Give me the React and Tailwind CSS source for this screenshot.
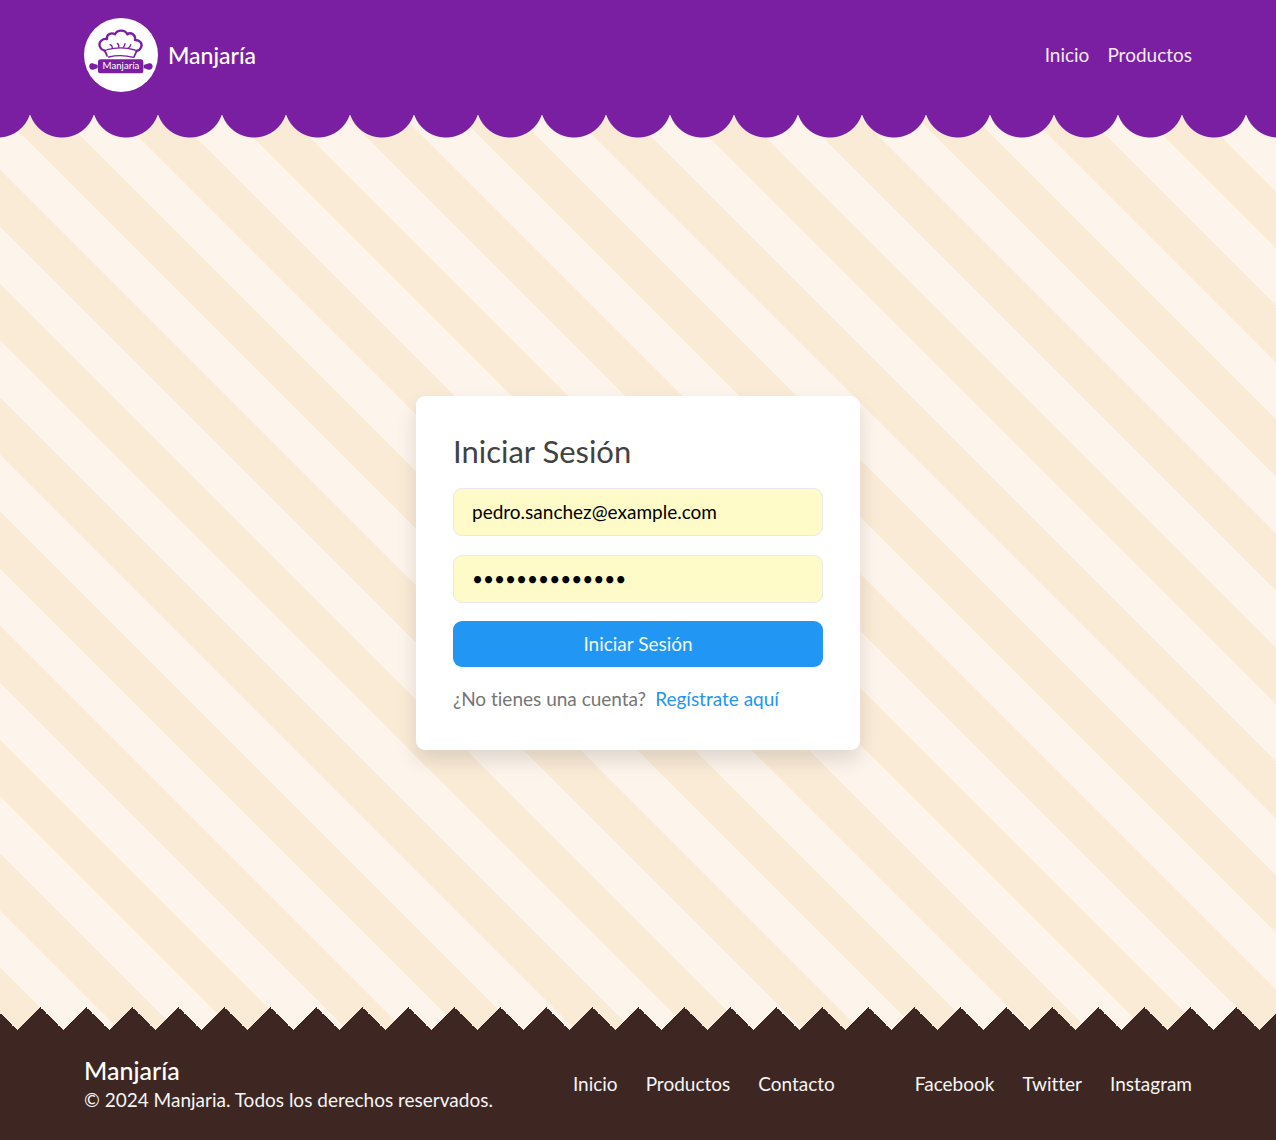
import React from "react";

function Logo() {
  return (
    <svg viewBox="24 24 222 222" className="size-[74px] shrink-0" role="img" aria-label="Logo de Manjaría">
      <circle cx="135" cy="135" r="111" fill="#fff" />
      <g fill="none" stroke="#7b1fa2" strokeLinecap="round" strokeLinejoin="round">
        <path
          d="M88 122C70 119 65 100 77 91C82 86 88 86 93 87C91 73 106 66 117 73C124 58 148 59 154 73C165 65 180 75 177 90C191 89 201 101 195 112C192 120 186 122 181 123"
          strokeWidth="7"
        />
        <path d="M84 121C90 127 92 133 93 138M183 123C178 130 176 135 174 141" strokeWidth="5" />
        <path d="M93 119Q136 108 177 120" strokeWidth="4" />
        <path d="M98 141Q135 132 172 142" strokeWidth="4" />
        <path d="M102 104Q109 106 109 114M124 100Q130 104 128 112M147 101Q146 108 142 112M164 104Q163 111 157 114" strokeWidth="4" />
      </g>
      <g fill="#7b1fa2">
        <rect x="66" y="148" width="136" height="42" rx="8" />
        <path d="M65 165V175C58 176 54 181 47 179C38 178 37 162 46 160C54 159 58 164 65 165Z" />
        <path d="M203 165V175C210 176 215 181 222 179C232 178 233 162 223 160C215 159 210 164 203 165Z" />
      </g>
      <text
        x="135"
        y="178"
        textAnchor="middle"
        fontSize="29"
        fontWeight="400"
        fill="#fff"
        fontFamily="Lato, sans-serif"
      >
        Manjaría
      </text>
    </svg>
  );
}

function NavLinks({ items, label, className }) {
  return (
    <nav aria-label={label} className={className}>
      {items.map((item) => (
        <a key={item} href="#" className="hover:underline">
          {item}
        </a>
      ))}
    </nav>
  );
}

const field =
  "h-12 w-full rounded-[9px] border border-[#e8e8ee] bg-[#fffbc8] px-[18px] text-black outline-none focus:border-[#2196f3]";

export default function App() {
  return (
    <div className="flex min-h-screen flex-col bg-[linear-gradient(45deg,#fdf4eb_25%,#faebd7_25%,#faebd7_50%,#fdf4eb_50%,#fdf4eb_75%,#faebd7_75%)] bg-[length:114px_114px] bg-[position:58px_0px] font-['Lato','Noto_Sans',sans-serif] text-[19px] leading-7 [font-variant-ligatures:none]">
      <header className="text-white">
        <div className="bg-[#7b1fa2] pt-[18px] pb-[23px]">
          <div className="mx-auto flex max-w-[1156px] items-center justify-between px-6">
            <a href="#" className="flex items-center gap-[10px] text-[23px] font-medium">
              <Logo />
              Manjaría
            </a>
            <NavLinks label="Principal" items={["Inicio", "Productos"]} className="flex gap-[18px] text-[#f3e9f6]" />
          </div>
        </div>
        <div className="h-[23px] bg-[radial-gradient(circle_at_50%_-11px,#7b1fa2_33px,transparent_34px)] bg-[length:64px_23px] bg-[position:30px_0px] bg-repeat-x" />
      </header>

      <main className="flex flex-1 items-center justify-center px-4 py-8">
        <form
          onSubmit={(e) => e.preventDefault()}
          className="flex w-full max-w-[444px] flex-col rounded-[9px] bg-white p-[37px] shadow-[0_10px_20px_rgba(0,0,0,0.12)]"
        >
          <h1 className="mb-[19px] text-[31px] leading-9 text-[#424242]">Iniciar Sesión</h1>
          <input
            type="email"
            aria-label="Correo electrónico"
            defaultValue="pedro.sanchez@example.com"
            className={field + " mb-[19px]"}
          />
          <input
            type="password"
            aria-label="Contraseña"
            defaultValue="contrasena1234"
            className={field + " mb-[18px]"}
          />
          <button type="submit" className="h-[46px] rounded-[9px] bg-[#2196f3] text-[#f0f8ff]">
            Iniciar Sesión
          </button>
          <p className="mt-[18px] flex flex-wrap gap-x-[9px] text-[#757575]">
            ¿No tienes una cuenta?
            <a href="#" className="text-[#2196f3] hover:underline">
              Regístrate aquí
            </a>
          </p>
        </form>
      </main>

      <footer className="text-[#f5f5f5]">
        <div className="h-[23px] bg-[conic-gradient(from_135deg_at_50%_0,#3e2723_90deg,transparent_0)] bg-[length:46px_23px] bg-[position:center_top] bg-repeat-x" />
        <div className="bg-[#3e2723] pt-6 pb-[26px]">
          <div className="mx-auto flex max-w-[1156px] flex-wrap items-center justify-between gap-y-4 px-6">
            <div>
              <h2 className="text-[25px] leading-8 font-medium text-white">Manjaría</h2>
              <p>© 2024 Manjaria. Todos los derechos reservados.</p>
            </div>
            <NavLinks label="Secciones" items={["Inicio", "Productos", "Contacto"]} className="flex gap-7" />
            <NavLinks label="Redes sociales" items={["Facebook", "Twitter", "Instagram"]} className="flex gap-7" />
          </div>
        </div>
      </footer>
    </div>
  );
}
